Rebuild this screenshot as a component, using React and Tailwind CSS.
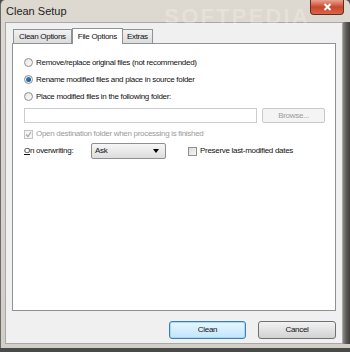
import React from 'react';

const font = "font-['Liberation_Sans',Arial,sans-serif]";

const Radio = ({ checked, label }) => (
  <label className="flex h-[17px] items-center gap-[3px]">
    <span className="flex h-[9px] w-[9px] items-center justify-center rounded-full border border-[#8e8f8f] bg-gradient-to-br from-[#e6e6e6] to-[#fafafa]">
      {checked && <span className="h-[5px] w-[5px] rounded-full bg-gradient-to-br from-[#3b8fd0] to-[#0c4d8a]" />}
    </span>
    <span>{label}</span>
  </label>
);

const Check = ({ checked, disabled, label }) => (
  <label className={`flex items-center gap-[3px] ${disabled ? 'text-[#9a9a9a]' : ''}`}>
    <span className={`flex h-[9px] w-[9px] items-center justify-center border ${disabled ? 'border-[#c4c4c4] bg-[#f4f4f4]' : 'border-[#8e8f8f] bg-gradient-to-br from-[#dcdcdc] to-[#f6f6f6]'}`}>
      {checked && (
        <svg width="7" height="7" viewBox="0 0 7 7">
          <path d="M1 3.5 L3 5.5 L6 1" stroke="#a9a9a9" strokeWidth="1.2" fill="none" />
        </svg>
      )}
    </span>
    <span>{label}</span>
  </label>
);

export default function App() {
  return (
    <div className={`h-[352px] w-[350px] overflow-hidden bg-[#4a4a4a] ${font} text-[8px] tracking-[-0.3px] text-[#111]`}>
      {/* Window */}
      <div className="flex h-[348px] w-[350px] flex-col rounded-t-[5px] border-l border-[#6a6a6a] bg-gradient-to-b from-[#ddd8d0] to-[#d2cec8]">
        {/* Title bar */}
        <div className="relative flex h-[22px] items-center pl-[5px] text-[11px] tracking-normal text-[#1e1e1e]">
          Clean Setup
          <span className="absolute right-[40px] top-[0px] text-[22px] font-bold tracking-widest text-[#ffffff]/25">SOFTPEDIA</span>
          <div className="absolute right-[6px] top-0 flex h-[15px] w-[34px] items-center justify-center rounded-b-[4px] border border-t-0 border-[#6b2a1f] bg-gradient-to-b from-[#e8a191] via-[#c9462c] to-[#d8654b]">
            <svg width="9" height="8" viewBox="0 0 9 8">
              <path d="M1.5 1 L7.5 7 M7.5 1 L1.5 7" stroke="#ffffff" strokeWidth="2" />
            </svg>
          </div>
        </div>

        <div className="flex flex-1">
          <div className="w-[4px]" />
          {/* Client area */}
          <div className="flex flex-1 flex-col border border-[#a8a8a8] bg-[#f0f0f0] px-[6px]">
            {/* Tabs */}
            <div className="flex h-[20px] items-end pl-[1px] pt-[5px]">
              <div className="flex h-[14px] items-center border border-b-0 border-[#8d9299] bg-gradient-to-b from-[#f2f2f2] to-[#dcdcdc] px-[5px]">Clean Options</div>
              <div className="relative -mb-px flex h-[16px] items-center border border-b-0 border-[#8d9299] bg-white px-[5px]">File Options</div>
              <div className="flex h-[14px] items-center border border-b-0 border-l-0 border-[#8d9299] bg-gradient-to-b from-[#f2f2f2] to-[#dcdcdc] px-[4px]">Extras</div>
            </div>
            {/* Panel */}
            <div className="flex h-[268px] flex-col border border-[#8d9299] bg-white pl-[11px] pr-[10px] pt-[10px]">
              <Radio label="Remove/replace original files (not recommended)" />
              <Radio checked label="Rename modified files and place in source folder" />
              <Radio label="Place modified files in the following folder:" />
              <div className="mt-[3px] flex items-center gap-[5px]">
                <div className="h-[15px] w-[233px] border border-[#c9cdd2] bg-white" />
                <div className="flex h-[15px] flex-1 items-center justify-center rounded-[2px] border border-[#c9c9c9] bg-[#f4f4f4] text-[#9a9a9a]">Browse...</div>
              </div>
              <div className="mt-[5px]">
                <Check checked disabled label="Open destination folder when processing is finished" />
              </div>
              <div className="mt-[3px] flex items-center">
                <span className="w-[67px]"><span className="underline">O</span>n overwriting:</span>
                <div className="flex h-[16px] w-[75px] items-center justify-between rounded-[2px] border border-[#8e8f8f] bg-gradient-to-b from-[#f6f6f6] to-[#dddddd] pl-[3px] pr-[6px]">
                  <span>Ask</span>
                  <svg width="6" height="4" viewBox="0 0 6 4"><path d="M0 0 H6 L3 4 Z" fill="#000" /></svg>
                </div>
                <div className="ml-[22px]">
                  <Check label="Preserve last-modified dates" />
                </div>
              </div>
            </div>
            {/* Buttons */}
            <div className="flex justify-end gap-[12px] pt-[10px]">
              <div className="flex h-[18px] w-[77px] items-center justify-center rounded-[3px] border border-[#3c7fb1] bg-gradient-to-b from-[#eaf6fd] to-[#bee6fd] shadow-[inset_0_0_0_1px_#a7d9f5]">Clean</div>
              <div className="flex h-[18px] w-[78px] items-center justify-center rounded-[3px] border border-[#707070] bg-gradient-to-b from-[#f2f2f2] to-[#d2d2d2]">Cancel</div>
            </div>
          </div>
          <div className="w-[7px] bg-gradient-to-r from-[#8a8680] via-[#5c5955] to-[#3f3e3c]" />
        </div>
        <div className="h-[4px]" />
      </div>
    </div>
  );
}
